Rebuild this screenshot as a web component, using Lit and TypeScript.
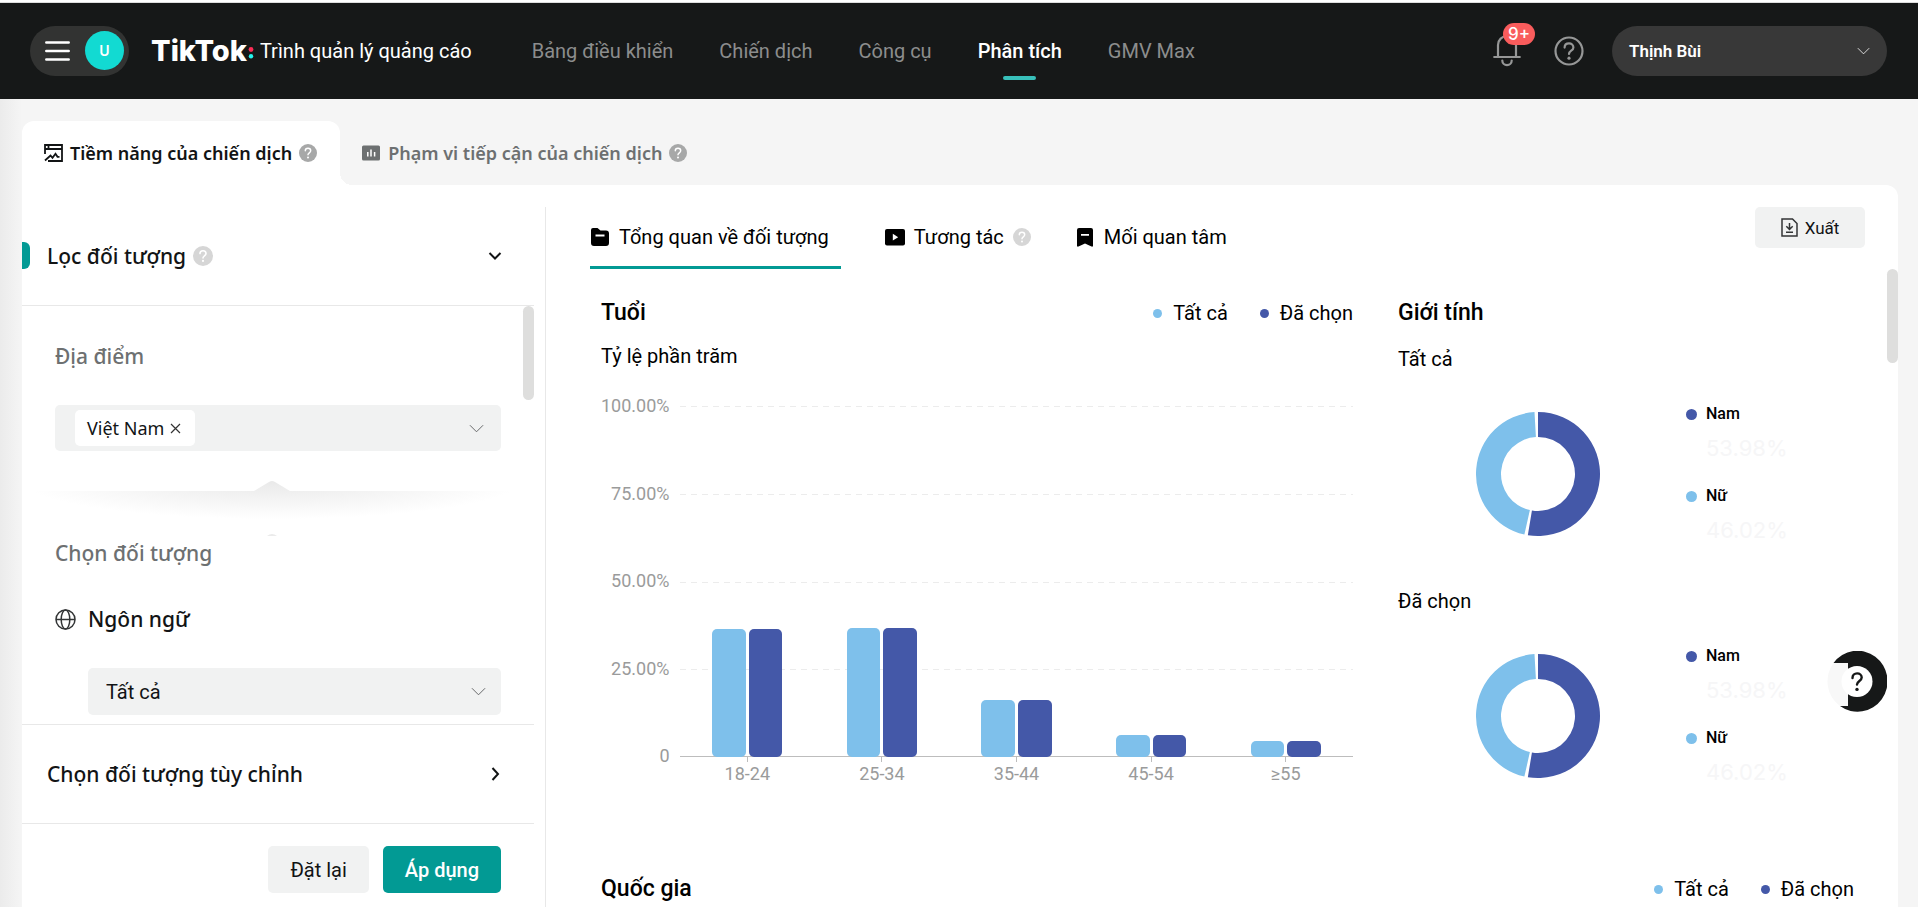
import { LitElement, html, css, svg, nothing } from "lit";
import { customElement, state, property } from "lit/decorators.js";
import { classMap } from "lit/directives/class-map.js";

const ages = [
  { label: "18-24", all: 36.6, chosen: 36.6 },
  { label: "25-34", all: 36.7, chosen: 36.7 },
  { label: "35-44", all: 16.2, chosen: 16.2 },
  { label: "45-54", all: 6.4, chosen: 6.4 },
  { label: "≥55", all: 4.7, chosen: 4.7 },
];

const chevron = (cls: string, d = "M1 1l7 7 7-7", box = "0 0 16 9") =>
  html`<svg class=${cls} viewBox=${box} aria-hidden="true"><path d=${d} fill="none" stroke="currentColor" /></svg>`;

const questionPath = svg`<path d="M7 7.6c0-1.8 1.3-2.9 3-2.9s3 1.1 3 2.8c0 2.3-3 2.3-3 4.5" fill="none" stroke="#fff" stroke-width="1.6" stroke-linecap="round" /><circle cx="10" cy="14.9" r="1.1" fill="#fff" />`;

@customElement("help-dot")
export class HelpDot extends LitElement {
  @property() tone = "#d6d6d6";
  static styles = css`
    :host { display: inline-flex; }
    .dot { width: var(--dot, 18px); height: var(--dot, 18px); display: block; }
  `;
  render() {
    return html`<svg class="dot" viewBox="0 0 20 20" aria-hidden="true">
      <circle cx="10" cy="10" r="10" fill=${this.tone} />${questionPath}
    </svg>`;
  }
}

@customElement("series-legend")
export class SeriesLegend extends LitElement {
  static styles = css`
    :host { display: flex; gap: 32px; font-size: 20px; line-height: 24px; }
    .item { display: flex; align-items: center; gap: 11px; }
    .mark { width: 9px; height: 9px; border-radius: 50%; }
    .all { background: #7ec0eb; }
    .chosen { background: #4458a8; }
  `;
  render() {
    return html`<span class="item"><i class="mark all"></i>Tất cả</span>
      <span class="item"><i class="mark chosen"></i>Đã chọn</span>`;
  }
}

@customElement("gender-chart")
export class GenderChart extends LitElement {
  @property() heading = "";
  @property({ type: Number }) male = 53.98;
  static styles = css`
    :host { display: block; height: 242px; }
    h3 { margin: 0; font-size: 20px; line-height: 24px; font-weight: 400; }
    .row { display: grid; grid-template-columns: 280fr 176fr; padding-top: 41px; }
    .ring { width: 124px; height: 124px; justify-self: center; }
    dl { margin: -10px 0 0 8px; display: grid; grid-template-columns: 20px 1fr; align-content: start; }
    dt { grid-column: 1 / 3; display: flex; align-items: center; gap: 9px; font-size: 16px; line-height: 24px; font-weight: 500; }
    dd { grid-column: 2; margin: 5px 0 19px; font: 400 22px/34px Inter, sans-serif; color: #f6f6f7; }
    .mark { width: 11px; height: 11px; border-radius: 50%; }
    .m { background: #4458a8; }
    .f { background: #7ec0eb; }
  `;
  private slice(from: number, to: number, fill: string) {
    const p = (r: number, t: number) => {
      const a = t * Math.PI * 2;
      return `${62 + r * Math.sin(a)} ${62 - r * Math.cos(a)}`;
    };
    const large = to - from > 0.5 ? 1 : 0;
    return svg`<path fill=${fill} d=${`M${p(62, from)}A62 62 0 ${large} 1 ${p(62, to)}L${p(37, to)}A37 37 0 ${large} 0 ${p(37, from)}Z`} />`;
  }
  render() {
    const share = 0.5262;
    return html`<h3>${this.heading}</h3>
      <div class="row">
        <svg class="ring" viewBox="0 0 124 124" role="img" aria-label=${this.heading}>
          ${this.slice(0, share, "#4458a8")}${this.slice(share + 0.009, 0.991, "#7ec0eb")}
        </svg>
        <dl>
          <dt><i class="mark m"></i>Nam</dt>
          <dd>${this.male.toFixed(2)}%</dd>
          <dt><i class="mark f"></i>Nữ</dt>
          <dd>${(100 - this.male).toFixed(2)}%</dd>
        </dl>
      </div>`;
  }
}

@customElement("app-root")
export class AppRoot extends LitElement {
  @state() private view = 0;
  @state() private places = ["Việt Nam"];

  static styles = css`
    :host { display: flex; flex-direction: column; height: 100vh; overflow: hidden; background: #f5f5f5; color: #121415; font-family: Roboto, "Liberation Sans", sans-serif; }
    * { box-sizing: border-box; }
    button, select { font: inherit; color: inherit; border: 0; background: none; padding: 0; margin: 0; cursor: pointer; }
    h1, h2 { margin: 0; font-weight: 500; }
    .wide { font-family: "Noto Sans", sans-serif; }

    .top { flex: none; height: 99px; border-top: 2px solid #fff; box-shadow: inset 0 1px #ddd; background: #161818; display: flex; align-items: center; padding: 0 31px 0 30px; color: #fff; }
    .who { width: 99px; height: 50px; border-radius: 25px; background: #323332; display: flex; align-items: center; justify-content: space-between; padding: 0 5px 0 15px; }
    .burger { width: 25px; height: 20px; }
    .avatar { width: 39px; height: 39px; border-radius: 50%; background: #12dad2; display: grid; place-items: center; font: 600 14px/20px Inter, sans-serif; }
    .brand { margin-left: 22px; display: flex; align-items: center; }
    .logo { font: 800 29px/32px Inter, sans-serif; }
    .colon { width: 6px; height: 22px; margin: 0 6px 0 1px; }
    .product { font-size: 20px; line-height: 28px; }
    .nav { display: flex; gap: 46px; margin-left: 60px; height: 94px; }
    .nav a { display: flex; align-items: center; color: #8c8d8d; text-decoration: none; font-size: 20px; position: relative; }
    .nav a.on { color: #fff; font-weight: 500; }
    .nav a.on::after { content: ""; position: absolute; left: 50%; margin-left: -17px; bottom: 18px; width: 33px; height: 4px; border-radius: 2px; background: #38c0ba; }
    .tools { margin-left: auto; display: flex; align-items: center; }
    .bell { position: relative; width: 28px; height: 33px; }
    .bell svg { width: 28px; height: 33px; display: block; }
    .count { position: absolute; left: 10px; top: -11px; width: 32px; height: 22px; border-radius: 11px; background: #f95c5c; font: 500 17px/22px Inter, sans-serif; text-align: center; }
    .help { width: 30px; height: 30px; margin-left: 33px; }
    .help svg { display: block; width: 30px; height: 30px; }
    .account { width: 275px; height: 50px; border-radius: 25px; margin-left: 28px; background: #383838; display: flex; align-items: center; justify-content: space-between; padding: 0 17px; font-size: 17px; font-weight: 600; }
    .account .c { width: 13px; height: 8px; }

    .body { flex: 1; min-height: 0; display: flex; flex-direction: column; padding: 22px 20px 0 22px; background: linear-gradient(90deg, #ebebeb, #f5f5f5 22px); }
    .tabs { display: flex; height: 64px; font-size: 18px; }
    .tab { display: flex; align-items: center; gap: 7px; color: #6d7071; padding: 0 23px 0 22px; white-space: nowrap; font-weight: 600; }
    .tab.on { background: #fff; color: #121415; border-radius: 12px 12px 0 0; position: relative; }
    .tab.on::after { content: ""; position: absolute; right: -12px; bottom: 0; width: 12px; height: 12px; background: radial-gradient(circle at 100% 0, #f5f5f5 12px, #fff 12px); }
    .tab svg { width: 19px; height: 18px; }
    .card { flex: 1; min-height: 0; display: grid; grid-template-columns: 524px minmax(0, 1fr); background: #fff; border-radius: 0 12px 0 0; overflow: hidden; }

    .side { display: flex; flex-direction: column; min-height: 0; margin-top: 22px; border-right: 1px solid #e8e8e8; padding-right: 11px; }
    .fold { flex: none; display: flex; align-items: center; width: 100%; height: 99px; padding: 0 32px 0 25px; font-size: 21px; line-height: 28px; font-weight: 500; border-bottom: 1px solid #e8e8e8; text-align: left; }
    .fold.open { position: relative; }
    .fold.open::before { content: ""; position: absolute; left: 0; top: 35px; width: 8px; height: 27px; border-radius: 0 6px 6px 0; background: #029a94; }
    .fold help-dot { margin-left: 7px; --dot: 20px; }
    .fold .c { margin-left: auto; width: 14px; height: 14px; stroke-width: 2; }
    .filters { flex: 1; min-height: 0; overflow: hidden; display: flex; }
    .fields { flex: 1; padding: 36px 22px 0 33px; }
    .thumb { width: 11px; height: 94px; border-radius: 6px; background: #dededd; flex: none; }
    .label { display: flex; align-items: center; font-size: 21px; line-height: 28px; font-weight: 500; color: #6d7071; }
    .label.dark { color: #121415; gap: 12px; margin: 38px 0 35px; }
    .label.dark svg { width: 21px; height: 21px; }
    .box { display: flex; align-items: center; height: 46px; border-radius: 5px; background: #f1f2f2; margin-top: 35px; padding: 0 17px 0 20px; }
    .box .c, .pick .c { width: 15px; height: 9px; margin-left: auto; color: #5f6162; }
    .tag { display: flex; align-items: center; height: 36px; border-radius: 5px; background: #fff; padding: 0 14px 0 12px; font-size: 18px; gap: 6px; }
    .tag button { display: flex; }
    .tag svg { width: 11px; height: 11px; }
    .fan { display: block; width: 500px; height: 60px; margin: 28px -22px 0 -33px; }
    .pick { display: grid; align-items: center; height: 47px; margin-left: 33px; border-radius: 5px; background: #f1f2f2; }
    .pick select { grid-area: 1 / 1; appearance: none; width: 100%; height: 47px; padding: 0 18px; font-family: Roboto, sans-serif; font-size: 20px; }
    .pick .c { grid-area: 1 / 1; margin-right: 15px; pointer-events: none; }
    .custom { border-top: 1px solid #e8e8e8; height: 100px; }
    .foot { flex: none; display: flex; justify-content: flex-end; gap: 14px; padding: 22px 33px 14px 0; font-family: Roboto, sans-serif; }
    .btn { height: 47px; border-radius: 5px; background: #f1f2f2; font-size: 20px; padding: 0 22px; }
    .btn.main { background: #029a94; color: #fff; font-weight: 500; }

    .content { display: flex; flex-direction: column; min-height: 0; min-width: 0; padding-top: 22px; }
    .bar { flex: none; display: flex; align-items: flex-start; justify-content: space-between; padding: 0 33px 0 44px; }
    .views { display: flex; gap: 44px; font-size: 20px; }
    .views button { display: flex; align-items: center; gap: 9px; height: 62px; border-bottom: 3px solid transparent; color: #000; padding: 0 12px 0 0; }
    .views button + button { padding-right: 2px; }
    .views button.on { border-color: #029a94; }
    .views svg { width: 20px; height: 20px; }
    .views svg.slim { width: 16px; margin-right: 2px; }
    .export { display: flex; align-items: center; justify-content: center; gap: 7px; width: 110px; height: 41px; border-radius: 5px; background: #f1f2f2; font-size: 17px; line-height: 24px; }
    .export svg { width: 17px; height: 19px; }
    .report { flex: 1; min-height: 0; overflow: hidden; display: flex; }
    .sheet { flex: 1; min-width: 0; padding: 30px 33px 0 55px; color: #000; }
    .cols { display: grid; grid-template-columns: 752fr 456fr; column-gap: 45px; }
    .head { display: flex; justify-content: space-between; align-items: center; }
    h2 { font-size: 23px; line-height: 28px; }
    .sub { font-size: 20px; line-height: 24px; margin: 17px 0 38px; }
    .plot { display: grid; grid-template-columns: 79px minmax(0, 1fr); }
    .axis { display: grid; height: 350px; align-content: space-between; justify-items: end; padding-right: 11px; font-size: 18px; color: #9a9b9b; }
    .axis span { height: 0; line-height: 0; }
    .area { display: grid; height: 351px; border-bottom: 1px solid #bdbdbd; }
    .lines { grid-area: 1 / 1; display: grid; grid-template-rows: repeat(4, 1fr); }
    .lines i { height: 1px; background: repeating-linear-gradient(90deg, #ececec 0 6px, transparent 6px 11px); }
    .bars { grid-area: 1 / 1; display: grid; grid-template-columns: repeat(5, 1fr); }
    .pair { display: flex; justify-content: center; align-items: flex-end; gap: 3px; height: 351px; }
    .pair i { width: 25%; border-radius: 5px; background: #7ec0eb; }
    .pair i + i { background: #4458a8; }
    .ticks { grid-column: 2; display: grid; grid-template-columns: repeat(5, 1fr); font-size: 18px; line-height: 24px; color: #9a9b9b; text-align: center; }
    .ticks span::before { content: ""; display: block; width: 1px; height: 5px; margin: 0 auto; background: #bdbdbd; }
    .gender h2 { margin-bottom: 20px; }
    .country { margin-top: 44px; }
    .chat { position: fixed; right: 31px; top: 651px; width: 60px; height: 61px; }
    .chat svg { display: block; width: 60px; height: 61px; }
  `;

  private renderTop() {
    const links = ["Bảng điều khiển", "Chiến dịch", "Công cụ", "Phân tích", "GMV Max"];
    return html`<header class="top">
      <button class="who" aria-label="Menu">
        <svg class="burger" viewBox="0 0 25 20"><path d="M1.3 1.5h22.4M1.3 10h22.4M1.3 18.5h22.4" stroke="#fff" stroke-width="2.5" stroke-linecap="round" /></svg>
        <span class="avatar">U</span>
      </button>
      <div class="brand">
        <span class="logo">TikTok</span>
        <svg class="colon" viewBox="0 0 6 22"><circle cx="3" cy="9.5" r="2.4" fill="#fe2c55" /><circle cx="3" cy="16.2" r="2.2" fill="#25f4ee" /></svg>
        <span class="product">Trình quản lý quảng cáo</span>
      </div>
      <nav class="nav">
        ${links.map((l) => html`<a href="#" class=${classMap({ on: l === "Phân tích" })}>${l}</a>`)}
      </nav>
      <div class="tools">
        <button class="bell" aria-label="9+">
          <svg viewBox="0 0 28 33"><g fill="none" stroke="#969797" stroke-width="2.2" stroke-linecap="round"><path d="M1.2 23h25.6M5 23V11a9 9 0 0 1 18 0v12M9.3 26.5a4.7 4.7 0 0 0 9.4 0" /></g></svg>
          <span class="count">9+</span>
        </button>
        <button class="help" aria-label="?">
          <svg viewBox="0 0 30 30"><g fill="none" stroke="#969797" stroke-width="2.2" stroke-linecap="round"><circle cx="15" cy="15" r="13.5" /><path d="M10.6 11.6c0-2.6 1.9-4.2 4.4-4.2s4.4 1.6 4.4 4c0 3.3-4.4 3.3-4.4 6.6" /></g><circle cx="15" cy="22.2" r="1.6" fill="#969797" /></svg>
        </button>
        <button class="account">Thịnh Bùi${chevron("c")}</button>
      </div>
    </header>`;
  }

  private renderSide() {
    return html`<aside class="side wide">
      <button class="fold open">Lọc đối tượng<help-dot></help-dot>${chevron("c", "M1.5 4l5.5 5.5L12.5 4", "0 0 14 14")}</button>
      <div class="filters">
        <div class="fields">
          <div class="label">Địa điểm</div>
          <div class="box">
            ${this.places.map((p) => html`<span class="tag">${p}<button aria-label=${`Xóa ${p}`} @click=${() => (this.places = [])}>
              <svg viewBox="0 0 11 11"><path d="M1 1l9 9M10 1l-9 9" stroke="#333" stroke-width="1.2" /></svg></button></span>`)}
            ${chevron("c")}
          </div>
          <svg class="fan" viewBox="0 0 500 60" aria-hidden="true">
            <defs>
              <radialGradient id="shade" gradientUnits="userSpaceOnUse" cx="0" cy="0" r="1" gradientTransform="translate(250 2) scale(250 38)">
                <stop offset="0" stop-color="#e9e9e9" /><stop offset="0.5" stop-color="#f4f4f4" /><stop offset="1" stop-color="#fff" />
              </radialGradient>
            </defs>
            <path d="M0 12H232L247 3Q250 1 253 3L268 12H500V45H0Z" fill="url(#shade)" />
            <path d="M245 57Q250 53 255 57Z" fill="#ebebeb" />
          </svg>
          <div class="label">Chọn đối tượng</div>
          <label class="label dark" for="lang">
            <svg viewBox="0 0 21 21"><g fill="none" stroke="#333536" stroke-width="1.5"><circle cx="10.5" cy="10.5" r="9.5" /><ellipse cx="10.5" cy="10.5" rx="4.3" ry="9.5" /><path d="M1 10.5h19" /></g></svg>
            Ngôn ngữ</label>
          <div class="pick"><select id="lang"><option>Tất cả</option></select>${chevron("c")}</div>
        </div>
        <div class="thumb"></div>
      </div>
      <button class="fold custom">Chọn đối tượng tùy chỉnh${chevron("c", "M4.5 1l5.5 6-5.5 6", "0 0 14 14")}</button>
      <div class="foot"><button class="btn">Đặt lại</button><button class="btn main">Áp dụng</button></div>
    </aside>`;
  }

  private renderContent() {
    const views = [
      { t: "Tổng quan về đối tượng", box: "0 0 20 20", d: svg`<path d="M1 3a2 2 0 0 1 2-2h4.5l3 2.5H16a3 3 0 0 1 3 3V16a3 3 0 0 1-3 3H4a3 3 0 0 1-3-3Z" /><path d="M5.5 8.5h9" stroke="#fff" stroke-width="1.8" />` },
      { t: "Tương tác", box: "0 0 20 20", d: svg`<rect y="2" width="20" height="16.5" rx="2" /><path d="M7.8 6.8v6.8l5.4-3.4Z" fill="#fff" />`, help: true },
      { t: "Mối quan tâm", box: "0 0 16 20", d: svg`<path d="M0 3a2 2 0 0 1 2-2h12a2 2 0 0 1 2 2v16.5h-1.5L8 16.5l-6.5 3H0Z" /><path d="M4 7.8h8" stroke="#fff" stroke-width="1.8" />` },
    ];
    return html`<main class="content">
      <div class="bar">
        <div class="views" role="tablist">
          ${views.map((v, i) => html`<button role="tab" aria-selected=${this.view === i} class=${classMap({ on: this.view === i })} @click=${() => (this.view = i)}>
            <svg class=${classMap({ slim: i === 2 })} viewBox=${v.box} aria-hidden="true">${v.d}</svg>${v.t}${v.help ? html`<help-dot></help-dot>` : nothing}</button>`)}
        </div>
        <button class="export"><svg viewBox="0 0 17 19"><g fill="none" stroke="#333536" stroke-width="1.5"><path d="M1 1h10.5L16 5.5V18H1ZM8.5 5v6.2M5.3 8.3l3.2 3.2 3.2-3.2M5 14.2h7" /></g></svg>Xuất</button>
      </div>
      <div class="report">
        <div class="sheet">
          <div class="cols">
            <section>
              <div class="head"><h2>Tuổi</h2><series-legend></series-legend></div>
              <div class="sub">Tỷ lệ phần trăm</div>
              <div class="plot">
                <div class="axis">${["100.00%", "75.00%", "50.00%", "25.00%", "0"].map((a) => html`<span>${a}</span>`)}</div>
                <div class="area">
                  <div class="lines"><i></i><i></i><i></i><i></i></div>
                  <div class="bars">${ages.map((a) => html`<div class="pair"><i style="height:${a.all}%"></i><i style="height:${a.chosen}%"></i></div>`)}</div>
                </div>
                <div class="ticks">${ages.map((a) => html`<span>${a.label}</span>`)}</div>
              </div>
            </section>
            <section class="gender">
              <h2>Giới tính</h2>
              <gender-chart heading="Tất cả"></gender-chart>
              <gender-chart heading="Đã chọn"></gender-chart>
            </section>
          </div>
          <div class="head country"><h2>Quốc gia</h2><series-legend></series-legend></div>
        </div>
        <div class="thumb"></div>
      </div>
    </main>`;
  }

  render() {
    return html`${this.renderTop()}
      <div class="body">
        <div class="tabs wide" role="tablist">
          <button class="tab on" role="tab">
            <svg viewBox="0 0 19 18"><path d="M1 10V1h17v16H4M1 5h17M4.5 1v4M1 16.5l5.5-5 2 2.3 3-4 2 3h2" fill="none" stroke="#121415" stroke-width="1.8" /></svg>
            Tiềm năng của chiến dịch<help-dot tone="#a7a8a8"></help-dot></button>
          <button class="tab" role="tab">
            <svg viewBox="0 0 19 18"><rect y="1.5" width="18" height="15" rx="1.5" fill="#6d7071" /><path d="M5.8 8v4.5M9 5.5v7M12.6 8v4.5" stroke="#fff" stroke-width="1.5" /></svg>
            Phạm vi tiếp cận của chiến dịch<help-dot tone="#a7a8a8"></help-dot></button>
        </div>
        <div class="card">${this.renderSide()}${this.renderContent()}</div>
      </div>
      <button class="chat" aria-label="?">
        <svg viewBox="0 0 60 61"><path d="M6.5 12A30 30.5 0 1 1 13 55H21V12Z" fill="#161818" /><path d="M6.5 12A30 30.5 0 0 0 13 55H21V12Z" fill="#f8f8f8" /><circle cx="30" cy="30.5" r="15.5" fill="#fff" /><path d="M25.5 27c0-2.8 2-4.6 4.6-4.6s4.6 1.7 4.6 4.2c0 3.4-4.7 3.4-4.7 7" fill="none" stroke="#161818" stroke-width="2.4" stroke-linecap="round" /><circle cx="30" cy="38.4" r="1.7" fill="#161818" /></svg>
      </button>`;
  }
}
